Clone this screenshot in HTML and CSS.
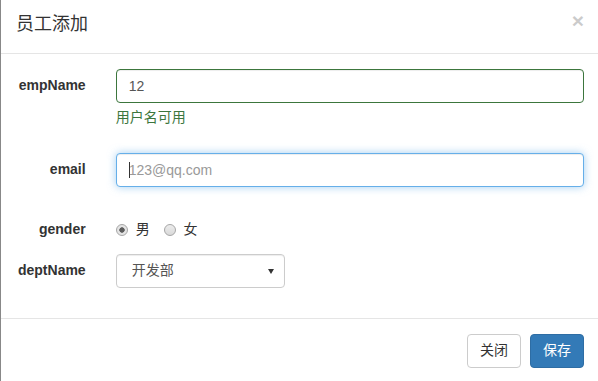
FILE: index.html
```html
<!DOCTYPE html>
<html lang="zh-CN">
<head>
<meta charset="utf-8">
<title>员工添加</title>
<link rel="stylesheet" href="styles.css">
</head>
<body>
<div class="modal">
  <div class="modal-header">
    <button type="button" class="close">×</button>
    <h4 class="modal-title">员工添加</h4>
  </div>
  <div class="modal-body">
    <form class="form">
      <div class="form-row has-success">
        <label class="col-label">empName</label>
        <div class="col-field">
          <input type="text" class="form-control" value="12">
          <span class="help-block">用户名可用</span>
        </div>
      </div>
      <div class="form-row">
        <label class="col-label">email</label>
        <div class="col-field">
          <div class="caret-wrap">
            <input type="text" class="form-control focused" placeholder="123@qq.com">
            <span class="caret"></span>
          </div>
          <span class="help-block"></span>
        </div>
      </div>
      <div class="form-row gender-row">
        <label class="col-label">gender</label>
        <div class="col-field">
          <label class="radio-inline"><input type="radio" name="gender" class="radio" checked> 男</label>
          <label class="radio-inline"><input type="radio" name="gender" class="radio"> 女</label>
        </div>
      </div>
      <div class="form-row">
        <label class="col-label">deptName</label>
        <div class="col-field narrow">
          <div class="select-wrap">
            <select class="form-control select">
              <option>开发部</option>
              <option>测试部</option>
            </select>
          </div>
        </div>
      </div>
    </form>
  </div>
  <div class="modal-footer">
    <button type="button" class="btn btn-default">关闭</button>
    <button type="button" class="btn btn-primary">保存</button>
  </div>
</div>
</body>
</html>
```

FILE: styles.css
```css
* {
  box-sizing: border-box;
}

html, body {
  margin: 0;
  padding: 0;
  background: #fff;
  overflow: hidden;
}

body {
  font-family: "Liberation Sans", "Noto Sans CJK SC", sans-serif;
  font-size: 14px;
  line-height: 1.42857;
  color: #333;
}

.modal {
  width: 600px;
  border-left: 1px solid #888;
  border-right: 1px solid #888;
  background: #fff;
}

.modal-header {
  padding: 12.3px 15px 15px;
  border-bottom: 1px solid #e5e5e5;
}

.modal-title {
  margin: 0;
  font-size: 18px;
  font-weight: 400;
  line-height: 1.42857;
}

.close {
  float: right;
  margin-top: -2px;
  padding: 0;
  border: 0;
  background: transparent;
  font-family: "Liberation Sans", sans-serif;
  font-size: 21px;
  font-weight: bold;
  line-height: 1;
  color: #000;
  opacity: .2;
  cursor: pointer;
}

.modal-body {
  padding: 15px;
}

.form-row {
  display: flex;
  margin: 0 -15px 15px;
}

.col-label {
  flex: 0 0 16.66667%;
  padding: 7px 15px 0;
  text-align: right;
  font-weight: bold;
  margin: 0;
}

.gender-row {
  margin-bottom: 14px;
}

.gender-row .col-label {
  padding-top: 8px;
}

.col-field {
  flex: 0 0 83.33333%;
  padding: 0 15px;
}

.col-field.narrow {
  flex: 0 0 33.33333%;
}

.form-control {
  display: block;
  width: 100%;
  height: 34px;
  padding: 6px 12px;
  font-family: inherit;
  font-size: 14px;
  line-height: 1.42857;
  color: #555;
  background: #fff;
  border: 1px solid #ccc;
  border-radius: 4px;
  box-shadow: inset 0 1px 1px rgba(0, 0, 0, .075);
  outline: none;
}

.form-control::placeholder {
  color: #999;
}

.has-success .form-control {
  border-color: #3c763d;
}

.has-success .help-block {
  color: #3c763d;
}

.help-block {
  display: block;
  margin: 5px 0 10px;
}

.form-control.focused {
  border-color: #66afe9;
  box-shadow: inset 0 1px 1px rgba(0, 0, 0, .075), 0 0 8px rgba(102, 175, 233, .6);
}

.caret-wrap {
  position: relative;
}

.caret {
  position: absolute;
  left: 13px;
  top: 9px;
  width: 1px;
  height: 16px;
  background: #333;
}

.radio-inline {
  position: relative;
  display: inline-block;
  padding-top: 8px;
  padding-left: 20px;
  font-weight: normal;
  vertical-align: middle;
  color: #333;
}

.radio-inline + .radio-inline {
  margin-left: 10px;
}

.radio {
  -webkit-appearance: none;
  appearance: none;
  position: absolute;
  left: 0;
  top: 12px;
  width: 12px;
  height: 12px;
  margin: 0;
  border: 1px solid #a6a6a6;
  border-radius: 50%;
  background: linear-gradient(#ececec, #d9d9d9);
}

.radio:checked {
  background: radial-gradient(circle, #5c5c5c 0, #5c5c5c 2.4px, #e4e4e4 3px);
}

.select-wrap {
  position: relative;
}

.select {
  -webkit-appearance: none;
  appearance: none;
  padding-left: 15px;
}

.select-wrap::after {
  content: "";
  position: absolute;
  right: 11px;
  top: 15px;
  width: 0;
  height: 0;
  border-left: 3px solid transparent;
  border-right: 3px solid transparent;
  border-top: 5px solid #333;
}

.modal-footer {
  padding: 15px;
  text-align: right;
  border-top: 1px solid #e5e5e5;
}

.btn {
  display: inline-block;
  padding: 6px 12px;
  font-family: inherit;
  font-size: 14px;
  line-height: 1.42857;
  border: 1px solid transparent;
  border-radius: 4px;
  vertical-align: middle;
  cursor: pointer;
}

.btn + .btn {
  margin-left: 5px;
}

.btn-default {
  color: #333;
  background: #fff;
  border-color: #ccc;
}

.btn-primary {
  color: #fff;
  background: #337ab7;
  border-color: #2e6da4;
}
```
